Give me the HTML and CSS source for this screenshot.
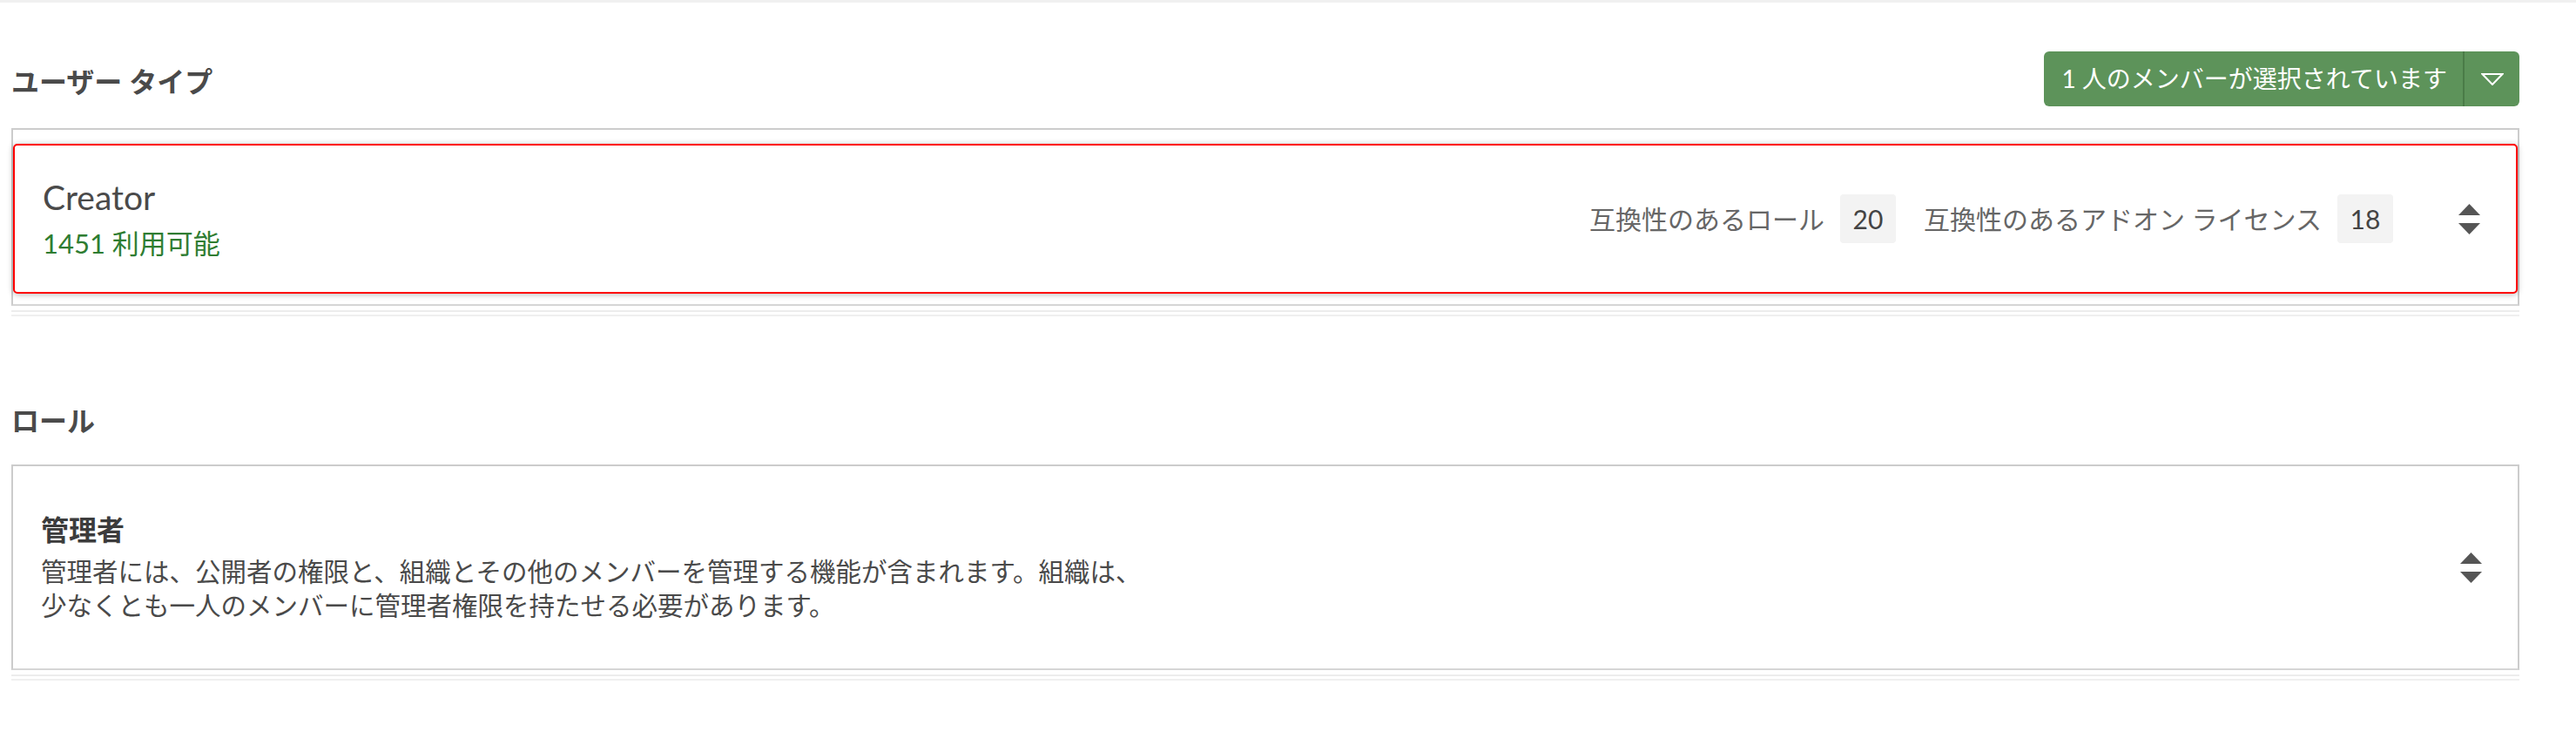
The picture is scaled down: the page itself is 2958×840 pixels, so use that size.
FILE: index.html
```html
<!DOCTYPE html>
<html lang="ja">
<head>
<meta charset="utf-8">
<title>ユーザー タイプ</title>
<link rel="stylesheet" href="styles.css">
</head>
<body>
<div class="topline"></div>
<main class="page">
  <section class="section section-usertype">
    <div class="section-head head-usertype">
      <h2 class="heading">ユーザー タイプ</h2>
      <div class="btn">
        <span class="btn-label">1 人のメンバーが選択されています</span>
        <span class="btn-caret">
          <svg width="26" height="14" viewBox="0 0 26 14"><polygon points="1.5,1 24.5,1 13,13" fill="none" stroke="#ffffff" stroke-width="2" stroke-linejoin="miter"/></svg>
        </span>
      </div>
    </div>
    <div class="box box-usertype">
      <div class="card card-selected">
        <div class="card-main">
          <div class="card-title">Creator</div>
          <div class="card-sub">1451 利用可能</div>
        </div>
        <div class="meta">
          <span class="meta-label">互換性のあるロール</span>
          <span class="badge">20</span>
          <span class="meta-label">互換性のあるアドオン ライセンス</span>
          <span class="badge badge-last">18</span>
          <svg class="sort" width="25" height="35" viewBox="0 0 25 35"><polygon points="12.5,0 25,13 0,13" fill="#555555"/><polygon points="0,22 25,22 12.5,35" fill="#555555"/></svg>
        </div>
      </div>
    </div>
    <div class="stackline"></div>
    <div class="stackline stackline-2"></div>
  </section>

  <section class="section section-role">
    <div class="section-head head-role">
      <h2 class="heading">ロール</h2>
    </div>
    <div class="box box-role">
      <div class="role-main">
        <div class="role-title">管理者</div>
        <div class="role-desc">管理者には、公開者の権限と、組織とその他のメンバーを管理する機能が含まれます。組織は、<br>少なくとも一人のメンバーに管理者権限を持たせる必要があります。</div>
      </div>
      <svg class="sort" width="25" height="35" viewBox="0 0 25 35"><polygon points="12.5,0 25,13 0,13" fill="#555555"/><polygon points="0,22 25,22 12.5,35" fill="#555555"/></svg>
    </div>
    <div class="stackline"></div>
    <div class="stackline stackline-2"></div>
  </section>
</main>
</body>
</html>
```

FILE: styles.css
```css
html, body {
  margin: 0;
  padding: 0;
  background: #ffffff;
}

body {
  font-family: "Lato", "Noto Sans CJK JP", sans-serif;
  color: #4a4a4a;
}

.topline {
  height: 3px;
  background: #f0f0f0;
}

.page {
  width: 2880px;
  padding-left: 13px;
}

.section-head {
  display: flex;
  align-items: center;
  justify-content: space-between;
}

.head-usertype {
  margin-top: 56px;
  height: 63px;
}

.head-role {
  margin-top: 100px;
  height: 40px;
}

.heading {
  margin: 0;
  font-size: 32px;
  line-height: 40px;
  font-weight: 700;
  color: #4a4a4a;
}

.head-usertype .heading {
  padding-top: 7px;
}

.btn {
  display: flex;
  height: 63px;
  background: #5d935a;
  border-radius: 6px;
  color: #ffffff;
  overflow: hidden;
}

.btn-label {
  padding: 0 18px 0 20px;
  font-size: 28px;
  line-height: 63px;
  white-space: nowrap;
}

.btn-caret {
  width: 63px;
  border-left: 2px solid #4a7b47;
  display: flex;
  align-items: center;
  justify-content: center;
}

.box {
  border: 2px solid #cccccc;
  border-bottom-color: #d6d6d6;
  box-sizing: border-box;
}

.box-usertype {
  margin-top: 25px;
  padding: 16px 0 12px 0;
}

.card {
  height: 172px;
  box-sizing: border-box;
  border: 2px solid #ff0000;
  border-radius: 5px;
  box-shadow: 0 1px 7px rgba(0, 0, 0, 0.28);
  display: flex;
  align-items: center;
  padding: 0 41px 0 32px;
  background: #ffffff;
}

.card-main {
  display: flex;
  flex-direction: column;
}

.card-title {
  font-size: 39px;
  line-height: 46px;
  color: #4a4a4a;
  margin-bottom: 10px;
}

.card-sub {
  font-size: 31px;
  line-height: 40px;
  color: #2f7d32;
}

.meta {
  margin-left: auto;
  display: flex;
  align-items: center;
}

.meta-label {
  font-size: 30px;
  line-height: 40px;
  color: #666666;
  margin-right: 18px;
  white-space: nowrap;
}

.badge {
  width: 64px;
  height: 56px;
  border-radius: 4px;
  background: #f3f3f3;
  display: flex;
  align-items: center;
  justify-content: center;
  font-size: 30px;
  color: #444444;
  margin-right: 32px;
}

.badge-last {
  margin-right: 75px;
}

.sort {
  display: block;
  flex: none;
}

.stackline {
  height: 2px;
  margin-top: 5px;
  background: #ececec;
}

.stackline-2 {
  margin-top: 3px;
  background: #efefef;
}

.box-role {
  margin-top: 30px;
  height: 236px;
  display: flex;
  align-items: center;
  padding: 0 41px 0 32px;
}

.role-main {
  display: flex;
  flex-direction: column;
  margin-right: auto;
}

.role-title {
  font-size: 32px;
  line-height: 40px;
  font-weight: 700;
  color: #3c3c3c;
  margin-bottom: 8px;
}

.role-desc {
  font-size: 29.5px;
  line-height: 39px;
  color: #4a4a4a;
}
```
